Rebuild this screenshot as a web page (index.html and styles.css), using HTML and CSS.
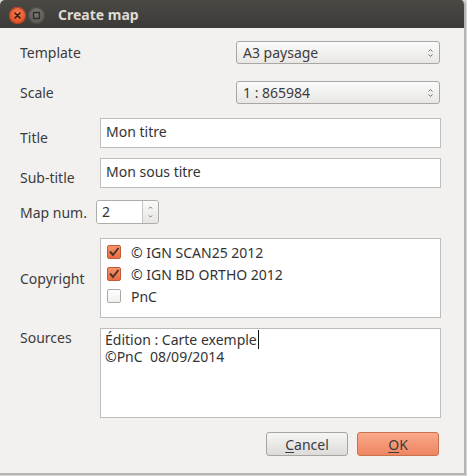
FILE: index.html
```html
<!DOCTYPE html>
<html>
<head>
<meta charset="utf-8">
<link rel="stylesheet" href="styles.css">
</head>
<body>
<div class="window">
  <div class="titlebar">
    <div class="wbtn close">
      <svg width="17" height="17" viewBox="0 0 17 17"><path d="M6 6 L11 11 M11 6 L6 11" stroke="#3a1a10" stroke-width="1.6" stroke-linecap="round"/></svg>
    </div>
    <div class="wbtn maxi">
      <svg width="17" height="17" viewBox="0 0 17 17"><rect x="5.5" y="5.5" width="6" height="6" rx="0.5" fill="none" stroke="#2e2e2b" stroke-width="1.4"/></svg>
    </div>
    <div class="wtitle">Create map</div>
  </div>
  <div class="content">
    <div class="row r1">
      <div class="label">Template</div>
      <div class="combo">
        <span>A3 paysage</span>
        <svg class="arrows" width="7" height="12" viewBox="0 0 7 12"><path d="M1.5 4.5 L3.5 2.5 L5.5 4.5" fill="none" stroke="#6d6d6a" stroke-width="1"/><path d="M1.5 7.5 L3.5 9.5 L5.5 7.5" fill="none" stroke="#6d6d6a" stroke-width="1"/></svg>
      </div>
    </div>
    <div class="row r2">
      <div class="label">Scale</div>
      <div class="combo">
        <span>1 : 865984</span>
        <svg class="arrows" width="7" height="12" viewBox="0 0 7 12"><path d="M1.5 4.5 L3.5 2.5 L5.5 4.5" fill="none" stroke="#6d6d6a" stroke-width="1"/><path d="M1.5 7.5 L3.5 9.5 L5.5 7.5" fill="none" stroke="#6d6d6a" stroke-width="1"/></svg>
      </div>
    </div>
    <div class="row r3">
      <div class="label lbl-low">Title</div>
      <div class="input">Mon titre</div>
    </div>
    <div class="row r4">
      <div class="label lbl-low">Sub-title</div>
      <div class="input">Mon sous titre</div>
    </div>
    <div class="row r5">
      <div class="label short">Map num.</div>
      <div class="spin">
        <div class="spin-field">2</div>
        <div class="spin-btns">
          <svg width="15" height="22" viewBox="0 0 15 22"><path d="M6 7.5 L7.5 6 L9 7.5" fill="none" stroke="#6d6d6a" stroke-width="1"/><path d="M6 14.5 L7.5 16 L9 14.5" fill="none" stroke="#6d6d6a" stroke-width="1"/></svg>
        </div>
      </div>
    </div>
    <div class="row r6">
      <div class="label">Copyright</div>
      <div class="list">
        <div class="item"><span class="cb on"><svg width="14" height="14" viewBox="0 0 14 14"><path d="M3 6.5 L6 10 L11.5 3" fill="none" stroke="#4b3329" stroke-width="2"/></svg></span><span>© IGN SCAN25 2012</span></div>
        <div class="item"><span class="cb on"><svg width="14" height="14" viewBox="0 0 14 14"><path d="M3 6.5 L6 10 L11.5 3" fill="none" stroke="#4b3329" stroke-width="2"/></svg></span><span>© IGN BD ORTHO 2012</span></div>
        <div class="item"><span class="cb"></span><span>PnC</span></div>
      </div>
    </div>
    <div class="row r7">
      <div class="label lbl-top">Sources</div>
      <div class="textarea">
        <div class="line"><span class="typed">Édition : Carte exemple</span></div>
        <div class="line">©PnC&nbsp; 08/09/2014</div>
      </div>
    </div>
    <div class="buttons">
      <div class="btn"><u>C</u>ancel</div>
      <div class="btn ok"><u>O</u>K</div>
    </div>
  </div>
</div>
</body>
</html>
```
FILE: styles.css
```css
html, body {
  margin: 0;
  padding: 0;
  background: #d9d8d6;
}
body {
  font-family: "Noto Sans", "DejaVu Sans", sans-serif;
  font-size: 14px;
  color: #3c3c3c;
  width: 467px;
  height: 476px;
  overflow: hidden;
}
.window {
  width: 464px;
  height: 473px;
  background: #f2f1f0;
  border-right: 2px solid #b5b3af;
  border-bottom: 2px solid #b5b3af;
  border-top-left-radius: 5px;
  border-top-right-radius: 5px;
  overflow: hidden;
  display: flex;
  flex-direction: column;
}
.titlebar {
  height: 28px;
  flex: 0 0 28px;
  background: linear-gradient(#4a4944, #3c3b37);
  display: flex;
  align-items: center;
  padding-left: 9px;
  box-sizing: border-box;
}
.wbtn {
  width: 17px;
  height: 17px;
  border-radius: 50%;
  margin-top: 2px;
  display: flex;
}
.close {
  background: radial-gradient(circle at 50% 35%, #f47b4f, #e1532a 70%);
  box-shadow: inset 0 0 0 1px #b2401f;
}
.maxi {
  margin-left: 2px;
  background: radial-gradient(circle at 50% 35%, #7a7974, #5c5b57 70%);
  box-shadow: inset 0 0 0 1px #4a4945;
}
.wtitle {
  margin-left: 13px;
  margin-top: 1px;
  font-weight: bold;
  color: #dfdbd2;
  font-size: 14px;
}
.content {
  padding: 0 4px 0 20px;
  display: flex;
  flex-direction: column;
}
.row {
  display: flex;
  align-items: center;
}
.label {
  width: 80px;
  flex: 0 0 80px;
  line-height: 17px;
}
.r1 { margin-top: 13px; height: 23px; }
.r2 { margin-top: 17px; height: 23px; }
.r3 { margin-top: 14px; height: 30px; }
.r4 { margin-top: 10px; height: 30px; }
.r5 { margin-top: 12px; height: 24px; }
.r6 { margin-top: 14px; height: 80px; }
.r7 { margin-top: 10px; height: 90px; align-items: flex-start; }
.r1 .label, .r2 .label { flex: 0 0 216px; width: 216px; }
.lbl-low { align-self: flex-end; padding-bottom: 2px; }
.lbl-top { padding-top: 1px; }
.short { flex: 0 0 76px; width: 76px; }

.combo {
  width: 204px;
  flex: 0 0 204px;
  height: 23px;
  box-sizing: border-box;
  border: 1px solid #a8a7a3;
  border-radius: 3px;
  background: linear-gradient(#fbfbfb, #e8e7e5);
  display: flex;
  align-items: center;
  justify-content: space-between;
  padding: 0 5px 0 6px;
  line-height: 17px;
}
.arrows { display: block; }

.input {
  width: 341px;
  flex: 0 0 341px;
  height: 30px;
  box-sizing: border-box;
  border: 1px solid #bebdbb;
  background: #fff;
  padding: 4px 5px 0 5px;
  line-height: 17px;
  color: #333;
}

.spin {
  width: 63px;
  height: 24px;
  box-sizing: border-box;
  border: 1px solid #aeadaa;
  border-radius: 3px;
  display: flex;
  overflow: hidden;
}
.spin-field {
  flex: 1;
  background: #fff;
  padding: 2px 5px 0 5px;
  line-height: 17px;
  color: #333;
  border-right: 1px solid #c6c5c2;
}
.spin-btns {
  width: 15px;
  background: linear-gradient(#fafafa, #e6e5e3);
  display: flex;
}

.list {
  width: 341px;
  flex: 0 0 341px;
  height: 80px;
  box-sizing: border-box;
  border: 1px solid #bebdbb;
  background: #fff;
  padding: 6px 0 0 6px;
  display: flex;
  flex-direction: column;
  gap: 8px;
  color: #333;
}
.item {
  display: flex;
  align-items: center;
  height: 14px;
  line-height: 17px;
}
.cb {
  width: 14px;
  height: 14px;
  box-sizing: border-box;
  border: 1px solid #a9a8a5;
  border-radius: 2px;
  background: linear-gradient(#fff, #f1f0ee);
  margin-right: 10px;
  position: relative;
  flex: 0 0 14px;
}
.cb.on {
  border-color: #c65a33;
  background: linear-gradient(#f7936c, #e96d42);
}
.cb svg {
  position: absolute;
  left: -1px;
  top: -1px;
}

.textarea {
  width: 341px;
  flex: 0 0 341px;
  height: 90px;
  box-sizing: border-box;
  border: 1px solid #bebdbb;
  background: #fff;
  padding: 2px 4px 0 4px;
  color: #333;
}
.line {
  height: 17px;
  line-height: 17px;
}
.typed {
  border-right: 1px solid #111;
  padding-right: 1px;
}

.buttons {
  margin-top: 14px;
  display: flex;
  justify-content: flex-end;
  gap: 9px;
  padding-right: 21px;
}
.btn {
  width: 82px;
  height: 24px;
  box-sizing: border-box;
  border: 1px solid #a6a5a2;
  border-radius: 3px;
  background: linear-gradient(#f6f6f5, #dcdbd9);
  display: flex;
  align-items: center;
  justify-content: center;
  line-height: 17px;
  color: #3c3c3c;
}
.btn u {
  text-decoration-thickness: 1px;
  text-underline-offset: 2px;
}
.btn.ok {
  border-color: #c9724f;
  background: linear-gradient(#f9a98a, #ee8561);
}
```
